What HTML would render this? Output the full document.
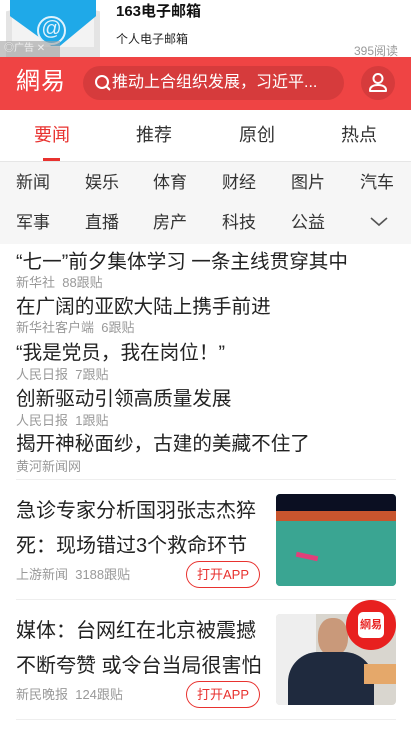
<!DOCTYPE html>
<html><head><meta charset="utf-8"><style>
*{margin:0;padding:0;box-sizing:border-box}
body{width:411px;height:731px;overflow:hidden;background:#fff;font-family:"Liberation Sans","Noto Sans CJK SC",sans-serif;position:relative;color:#333}
.a{position:absolute;white-space:nowrap}
.hl{font-size:19.6px;color:#222;line-height:24px;left:16px}
.src{font-size:13px;color:#999;line-height:16px;left:16px}
.cat{font-size:17px;color:#333;line-height:20px}
.btn{position:absolute;width:74px;height:27px;border:1px solid #e8322f;border-radius:14px;color:#e8322f;font-size:13px;text-align:center;line-height:25px}
</style></head><body>
<!-- ad -->
<div class="a" style="left:0;top:0;width:100px;height:57px;background:#fff;overflow:hidden">
 <div style="position:absolute;left:6px;top:0;width:94px;height:57px;background:#e4e4e4;clip-path:polygon(0 20%,50% 0,100% 20%,100% 100%,0 100%)"></div>
 <div style="position:absolute;left:12px;top:0;width:82px;height:47px;background:#f3f3f3"></div>
 <div style="position:absolute;left:10px;top:0;width:86px;height:46px;background:#1fa9e8;clip-path:polygon(0 0,100% 0,100% 35%,58% 100%,48% 100%,0 35%)"></div>
 <div style="position:absolute;left:37px;top:16px;width:29px;height:29px;border-radius:50%;border:2.5px solid #dff2fc;color:#dff2fc;font-size:20px;text-align:center;line-height:23px">@</div>
 <div style="position:absolute;left:0;top:41px;width:60px;height:16px;background:rgba(160,160,160,.6);color:#eee;font-size:10px;line-height:16px;padding-left:4px">◎广告 ✕</div>
</div>
<div class="a" style="left:116px;top:2px;font-size:15px;font-weight:bold;color:#111;line-height:20px">163电子邮箱</div>
<div class="a" style="left:116px;top:31px;font-size:12px;color:#222;line-height:16px">个人电子邮箱</div>
<div class="a" style="left:354px;top:43px;font-size:12px;color:#999;line-height:16px">395阅读</div>
<!-- header -->
<div class="a" style="left:0;top:57px;width:411px;height:53px;background:#ef4444"></div>
<div class="a" style="left:16px;top:66px;font-size:24px;color:#fff;line-height:32px;letter-spacing:1px">網易</div>
<div class="a" style="left:83px;top:66px;width:261px;height:34px;border-radius:17px;background:#d63b3c"></div>
<svg class="a" style="left:94px;top:74px" width="18" height="18" viewBox="0 0 18 18"><circle cx="8" cy="8" r="6" fill="none" stroke="#fff" stroke-width="2"/><path d="M12.5 12.5L16 16" stroke="#fff" stroke-width="2"/></svg>
<div class="a" style="left:112px;top:72px;font-size:16px;color:#fff;line-height:22px">推动上合组织发展，习近平...</div>
<div class="a" style="left:361px;top:66px;width:34px;height:34px;border-radius:50%;background:#d63b3c"></div>
<svg class="a" style="left:366px;top:70px" width="24" height="24" viewBox="0 0 24 24"><circle cx="12" cy="8.5" r="4.5" fill="none" stroke="#fff" stroke-width="2"/><path d="M4 21v-1c0-3 3-5 8-5s8 2 8 5v1z" fill="none" stroke="#fff" stroke-width="2" stroke-linejoin="round"/></svg>
<!-- tabs -->
<div class="a" style="left:34px;top:124px;font-size:18px;color:#e8322f;line-height:22px">要闻</div>
<div class="a" style="left:136px;top:124px;font-size:18px;color:#333;line-height:22px">推荐</div>
<div class="a" style="left:239px;top:124px;font-size:18px;color:#333;line-height:22px">原创</div>
<div class="a" style="left:341px;top:124px;font-size:18px;color:#333;line-height:22px">热点</div>
<div class="a" style="left:43px;top:158px;width:17px;height:3px;background:#e8322f"></div>
<!-- categories -->
<div class="a" style="left:0;top:161px;width:411px;height:83px;background:#f6f6f6;border-top:1px solid #e6e6e6"></div>
<div class="a cat" style="left:16px;top:173px">新闻</div>
<div class="a cat" style="left:85px;top:173px">娱乐</div>
<div class="a cat" style="left:153px;top:173px">体育</div>
<div class="a cat" style="left:222px;top:173px">财经</div>
<div class="a cat" style="left:291px;top:173px">图片</div>
<div class="a cat" style="left:360px;top:173px">汽车</div>
<div class="a cat" style="left:16px;top:213px">军事</div>
<div class="a cat" style="left:85px;top:213px">直播</div>
<div class="a cat" style="left:153px;top:213px">房产</div>
<div class="a cat" style="left:222px;top:213px">科技</div>
<div class="a cat" style="left:291px;top:213px">公益</div>
<svg class="a" style="left:369px;top:216px" width="20" height="12" viewBox="0 0 20 12"><path d="M2 2l8 7 8-7" fill="none" stroke="#555" stroke-width="1.6"/></svg>
<!-- text news -->
<div class="a hl" style="top:250px">“七一”前夕集体学习 一条主线贯穿其中</div>
<div class="a src" style="top:275px">新华社&nbsp;&nbsp;88跟贴</div>
<div class="a hl" style="top:295px">在广阔的亚欧大陆上携手前进</div>
<div class="a src" style="top:320px">新华社客户端&nbsp;&nbsp;6跟贴</div>
<div class="a hl" style="top:341px">“我是党员，我在岗位！”</div>
<div class="a src" style="top:367px">人民日报&nbsp;&nbsp;7跟贴</div>
<div class="a hl" style="top:387px">创新驱动引领高质量发展</div>
<div class="a src" style="top:413px">人民日报&nbsp;&nbsp;1跟贴</div>
<div class="a hl" style="top:432px">揭开神秘面纱，古建的美藏不住了</div>
<div class="a src" style="top:459px">黄河新闻网</div>
<div class="a" style="left:16px;top:479px;width:380px;height:1px;background:#eee"></div>
<!-- card 1 -->
<div class="a hl" style="top:494px;line-height:35px;font-size:20px">急诊专家分析国羽张志杰猝<br>死：现场错过3个救命环节</div>
<div class="a src" style="top:567px;font-size:13px">上游新闻&nbsp;&nbsp;3188跟贴</div>
<div class="btn" style="left:186px;top:561px">打开APP</div>
<div class="a" style="left:276px;top:494px;width:120px;height:92px;border-radius:4px;overflow:hidden;background:#2f9e8c">
 <div style="position:absolute;left:0;top:0;width:120px;height:17px;background:#0b0f22"></div>
 <div style="position:absolute;left:0;top:17px;width:120px;height:10px;background:#c8552e"></div>
 <div style="position:absolute;left:0;top:27px;width:120px;height:65px;background:#3aa592"></div>
 <div style="position:absolute;left:20px;top:60px;width:22px;height:5px;background:#e0407a;transform:rotate(12deg)"></div>
</div>
<div class="a" style="left:16px;top:599px;width:380px;height:1px;background:#eee"></div>
<!-- card 2 -->
<div class="a hl" style="top:614px;line-height:35px;font-size:20px">媒体：台网红在北京被震撼<br>不断夸赞 或令台当局很害怕</div>
<div class="a src" style="top:687px">新民晚报&nbsp;&nbsp;124跟贴</div>
<div class="btn" style="left:186px;top:681px">打开APP</div>
<div class="a" style="left:276px;top:614px;width:120px;height:91px;border-radius:4px;overflow:hidden;background:#d9d6cf">
 <div style="position:absolute;left:0;top:0;width:40px;height:91px;background:#eee"></div>
 <div style="position:absolute;left:42px;top:4px;width:30px;height:38px;border-radius:45%;background:#c9997a"></div>
 <div style="position:absolute;left:12px;top:38px;width:86px;height:60px;border-radius:30px 30px 0 0;background:#1f2a3e"></div>
 <div style="position:absolute;left:88px;top:50px;width:32px;height:20px;background:#e5a86a"></div>
</div>
<div class="a" style="left:346px;top:600px;width:50px;height:50px;border-radius:50%;background:#e8201f"></div>
<div class="a" style="left:358px;top:612px;width:26px;height:26px;border-radius:5px;background:#fff;color:#e8201f;font-size:11px;line-height:26px;text-align:center;font-weight:bold">網易</div>
<div class="a" style="left:16px;top:719px;width:380px;height:1px;background:#eee"></div>
</body></html>
